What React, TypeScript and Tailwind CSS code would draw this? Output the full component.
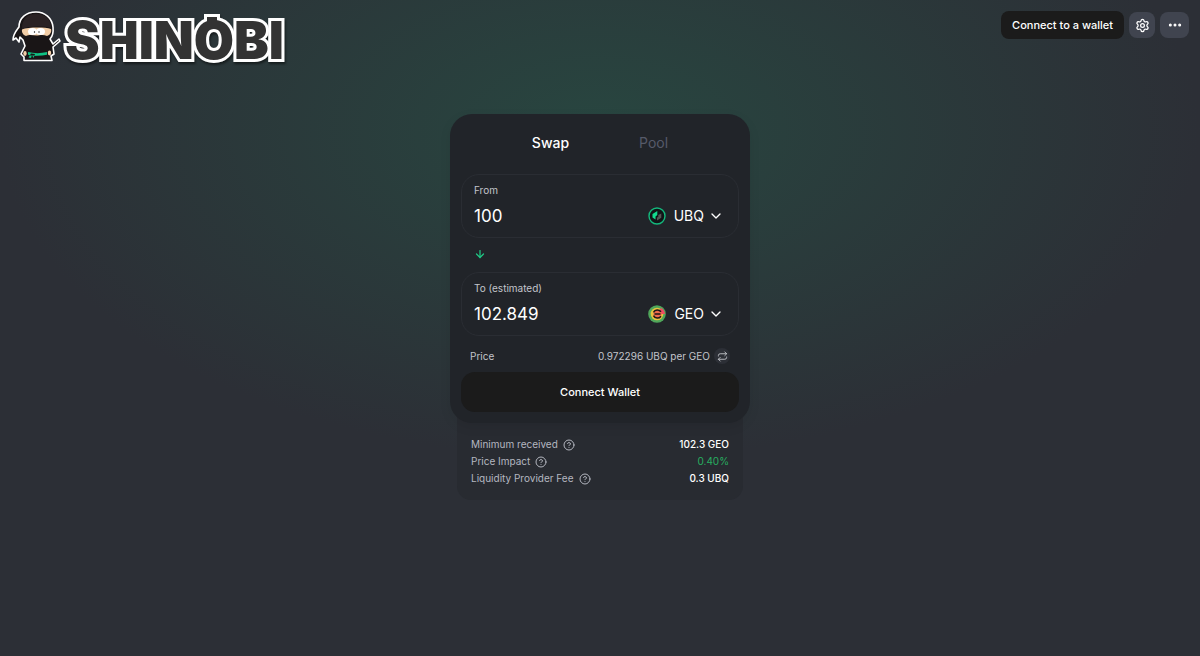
import { useState } from "react";
import type { ReactNode } from "react";
import {
  ArrowDown,
  ChevronDown,
  CircleHelp,
  Ellipsis,
  Repeat,
  Settings,
} from "lucide-react";

interface CurrencyFieldProps {
  id: string;
  label: string;
  value: string;
  onChange: (value: string) => void;
  symbol: string;
  logo: ReactNode;
}

interface DetailRow {
  label: string;
  value: string;
  valueClass: string;
}

const DETAILS: DetailRow[] = [
  {
    label: "Minimum received",
    value: "102.3 GEO",
    valueClass: "font-medium text-white",
  },
  { label: "Price Impact", value: "0.40%", valueClass: "text-[#27ae60]" },
  {
    label: "Liquidity Provider Fee",
    value: "0.3 UBQ",
    valueClass: "font-medium text-white",
  },
];

const NINJA_OUTLINE =
  "M25 1 C34 1 41 7 42 16 C42.5 21 42 25 39 28 L42 33 L48 28 L49 30 L42 36 L43 43 L40 45 L41 49.5 H13 L13 46 L10 43 L14 35 L12 29 L9 26 L8 31 L5 27 L2 29 C2 23 5 20 8 16 C8 7 15 1 25 1Z";

const Logo = () => (
  <svg
    viewBox="0 -6 280 68"
    className="h-[68px] w-[280px]"
    role="img"
    aria-label="Shinobi"
  >
    <path
      d={NINJA_OUTLINE}
      fill="#191516"
      stroke="#fff"
      strokeWidth="1.6"
      strokeLinejoin="round"
    />
    {/* capucha */}
    <path d="M11 18 C11 7 17 3 25 3 C34 3 40 8 40 17 C33 15 18 15 11 18Z" fill="#2a2224" />
    {/* cara y ojos */}
    <path
      d="M11 18.5 C17 16 34 16 40 18 C41 21 39 24 36 25 C32 23 28 24.5 25.5 24.5 C22 24.5 19 23 15 25 C12 24 10.5 21 11 18.5Z"
      fill="#f2cda6"
    />
    <ellipse cx="21.5" cy="20.5" rx="4.5" ry="3.6" fill="#fff" />
    <ellipse cx="29.5" cy="20.5" rx="4.5" ry="3.6" fill="#fff" />
    <circle cx="23.5" cy="21" r="0.7" fill="#111" />
    <circle cx="28" cy="21" r="0.7" fill="#111" />
    {/* manos */}
    <ellipse cx="14" cy="42.5" rx="1.7" ry="2.4" fill="#f2cda6" />
    <ellipse cx="38.5" cy="42" rx="1.7" ry="2.4" fill="#f2cda6" />
    {/* cinturón */}
    <path
      d="M17 41 C23 42.5 30 42.5 36 41 V43.8 C30 45 23 45 17 43.8Z M20 42.5 L17.5 46.5 L20 47 L21 44 L22.5 47 L24 43Z"
      fill="#10c283"
    />
    <g className="drop-shadow-[1px_2px_1px_rgba(0,0,0,0.5)]">
      <rect x="193" y="3" width="16" height="9" fill="#fff" />
      <text
        x="54"
        y="48"
        fill="#333"
        stroke="#fff"
        strokeWidth="6"
        strokeLinejoin="miter"
        paintOrder="stroke"
        className="font-['Inter',sans-serif] text-[52px] font-black"
      >
        SHINOBI
      </text>
      <rect x="196" y="6" width="10" height="8" fill="#333" />
    </g>
  </svg>
);

const UbqLogo = () => (
  <svg viewBox="0 0 18 18" className="size-[18px]" aria-hidden="true">
    <circle cx="9" cy="9" r="8" fill="#111417" stroke="#14b87c" strokeWidth="1.4" />
    <path d="M9.3 4 V8 L7.5 9.5 V12.5 L4.5 10.5 V7Z" fill="#12d98d" />
    <path d="M10.3 8 L13.3 6.5 V10.8 L9 13.6 V10.5 L10.3 10Z" fill="#555" />
  </svg>
);

const GeoLogo = () => (
  <svg viewBox="0 0 18 18" className="size-[18px]" aria-hidden="true">
    <circle cx="9" cy="9" r="8.8" fill="#4fa65a" />
    <circle cx="9" cy="9" r="6.3" fill="#e9c23e" />
    <path d="M9 9 L13 3 A8 8 0 0 1 17 9Z" fill="#ef4b64" />
    <circle cx="9.5" cy="9" r="4.2" fill="#ee6a4c" />
    <path
      d="M13 6.8 C11 4.2 7 4.2 5.5 7.4 M6.5 9 H12.5 M13 11.2 C11 13.8 7 13.8 5.5 10.6"
      fill="none"
      stroke="#1c1717"
      strokeWidth="1.5"
    />
  </svg>
);

const CurrencyField = ({
  id,
  label,
  value,
  onChange,
  symbol,
  logo,
}: CurrencyFieldProps) => (
  <div className="rounded-[18px] border border-[#2a2d33] px-3 pt-2 pb-[7px]">
    <label htmlFor={id} className="block text-[10px] leading-[14px] text-[#c3c5cb]">
      {label}
    </label>
    <div className="mt-[5px] flex h-7 items-center">
      <input
        id={id}
        type="text"
        inputMode="decimal"
        value={value}
        onChange={(e) => onChange(e.target.value)}
        className="w-0 min-w-0 flex-1 bg-transparent text-[17px] leading-6 text-white outline-none"
      />
      <button
        type="button"
        className="flex items-center gap-2 pr-[2px] text-[14px] leading-5 text-white"
      >
        {logo}
        <span className="flex items-center gap-1">
          {symbol}
          <ChevronDown className="size-4" />
        </span>
      </button>
    </div>
  </div>
);

export default function App() {
  const [from, setFrom] = useState("100");
  const [to, setTo] = useState("102.849");

  return (
    <div className="min-h-screen bg-[#2c2f36] bg-[radial-gradient(50%_50%_at_50%_20%,#284640_0%,#2c2f36_100%)] font-['Inter',sans-serif]">
      <header className="flex items-start justify-between px-[11px] py-[5px]">
        <a href="#home">
          <Logo />
        </a>
        <div className="mt-[6px] flex items-center gap-[5px]">
          <button
            type="button"
            className="h-7 rounded-lg bg-[#1b1b1b] px-[11px] text-[11px] font-medium text-white"
          >
            Connect to a wallet
          </button>
          <button
            type="button"
            aria-label="Settings"
            className="flex h-[26px] w-[26px] items-center justify-center rounded-lg bg-[#40444f] text-white"
          >
            <Settings className="size-[15px]" />
          </button>
          <button
            type="button"
            aria-label="More"
            className="flex h-[26px] w-[29px] items-center justify-center rounded-lg bg-[#40444f] text-white"
          >
            <Ellipsis className="size-4" strokeWidth={2.5} />
          </button>
        </div>
      </header>

      <main className="mx-auto mt-9 w-[300px]">
        <section className="relative z-10 rounded-[22px] bg-[#212429] px-[11px] pb-[11px] shadow-[0_4px_12px_rgba(0,0,0,0.08)]">
          <nav className="flex h-[60px] items-center justify-center gap-[70px] pb-[3px] text-[14px]">
            <a href="#swap" className="font-medium text-white">
              Swap
            </a>
            <a href="#pool" className="text-[#565a69]">
              Pool
            </a>
          </nav>

          <CurrencyField
            id="from"
            label="From"
            value={from}
            onChange={setFrom}
            symbol="UBQ"
            logo={<UbqLogo />}
          />
          <div className="flex h-[34px] items-center px-[13px] pb-[2px]">
            <button type="button" aria-label="Switch currencies">
              <ArrowDown className="size-3 text-[#1fc784]" strokeWidth={2.5} />
            </button>
          </div>
          <CurrencyField
            id="to"
            label="To (estimated)"
            value={to}
            onChange={setTo}
            symbol="GEO"
            logo={<GeoLogo />}
          />

          <div className="flex h-9 items-center justify-between px-[9px] pt-1 text-[10px] text-[#c3c5cb]">
            <span>Price</span>
            <span className="flex items-center gap-1">
              0.972296 UBQ per GEO
              <button
                type="button"
                aria-label="Invert price"
                className="flex size-4 items-center justify-center rounded-full bg-[#2c2f36]"
              >
                <Repeat className="size-[11px]" />
              </button>
            </span>
          </div>

          <button
            type="button"
            className="h-10 w-full rounded-[14px] bg-[#1b1b1b] text-[11px] font-medium text-white"
          >
            Connect Wallet
          </button>
        </section>

        <section className="mx-[7px] -mt-4 rounded-b-[14px] bg-[#282b31] px-[14px] pt-[29px] pb-[13px]">
          {DETAILS.map((row) => (
            <div
              key={row.label}
              className="flex h-[17px] items-center justify-between text-[10px]"
            >
              <span className="flex items-center gap-[5px] text-[#b4b7c0]">
                {row.label}
                <CircleHelp className="size-3" />
              </span>
              <span className={row.valueClass}>{row.value}</span>
            </div>
          ))}
        </section>
      </main>
    </div>
  );
}
